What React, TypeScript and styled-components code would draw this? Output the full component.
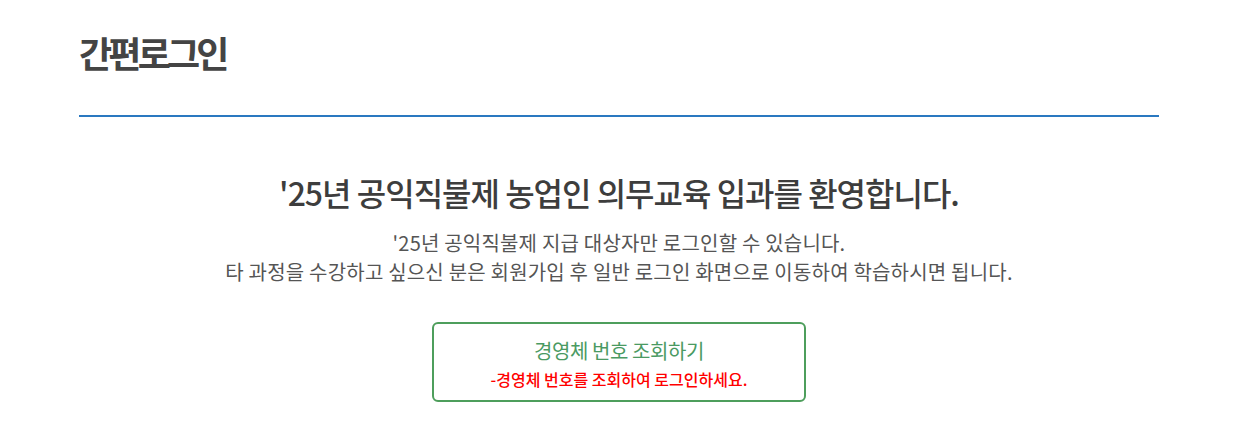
import React from "react";
import styled, { createGlobalStyle } from "styled-components";

const Global = createGlobalStyle`
  html, body { margin: 0; padding: 0; background: #fff; }
  body { font-family: "Noto Sans CJK KR", "Noto Sans", sans-serif; color: #444; }
`;

const Page = styled.div`
  width: 1080px;
  margin: 0 auto;
  padding-top: 26px;
`;

const Header = styled.div`
  border-bottom: 2px solid #2a78c0;
  padding-bottom: 37px;
`;

const Title = styled.h1`
  margin: 0;
  font-size: 36px;
  font-weight: 700;
  letter-spacing: -3.8px;
  color: #444;
  line-height: 52px;
`;

const Content = styled.div`
  display: flex;
  flex-direction: column;
  align-items: center;
  padding-top: 53px;
`;

const Heading = styled.h2`
  margin: 0;
  font-size: 32px;
  font-weight: 500;
  letter-spacing: -1px;
  color: #3d3d3d;
  line-height: 44px;
`;

const Desc = styled.p`
  margin: 14px 0 0;
  font-size: 20px;
  font-weight: 400;
  color: #555;
  line-height: 29px;
  text-align: center;
  letter-spacing: 0.2px;
`;

const LookupButton = styled.button`
  margin-top: 36px;
  width: 374px;
  height: 80px;
  box-sizing: border-box;
  border: 2px solid #4e9e5c;
  border-radius: 6px;
  background: #fff;
  display: flex;
  flex-direction: column;
  align-items: center;
  justify-content: flex-start;
  padding: 13px 0 0;
  gap: 3px;
  cursor: pointer;
  font-family: inherit;
`;

const ButtonLabel = styled.span`
  font-size: 20px;
  font-weight: 400;
  color: #4a9a62;
  letter-spacing: -0.4px;
  line-height: 28px;
`;

const ButtonNote = styled.span`
  font-size: 16px;
  font-weight: 500;
  color: #ff0000;
  letter-spacing: 0;
  line-height: 22px;
`;

export default function App() {
  return (
    <>
      <Global />
      <Page>
        <Header>
          <Title>간편로그인</Title>
        </Header>
        <Content>
          <Heading>'25년 공익직불제 농업인 의무교육 입과를 환영합니다.</Heading>
          <Desc>
            '25년 공익직불제 지급 대상자만 로그인할 수 있습니다.
            <br />
            타 과정을 수강하고 싶으신 분은 회원가입 후 일반 로그인 화면으로 이동하여 학습하시면 됩니다.
          </Desc>
          <LookupButton type="button">
            <ButtonLabel>경영체 번호 조회하기</ButtonLabel>
            <ButtonNote>-경영체 번호를 조회하여 로그인하세요.</ButtonNote>
          </LookupButton>
        </Content>
      </Page>
    </>
  );
}
